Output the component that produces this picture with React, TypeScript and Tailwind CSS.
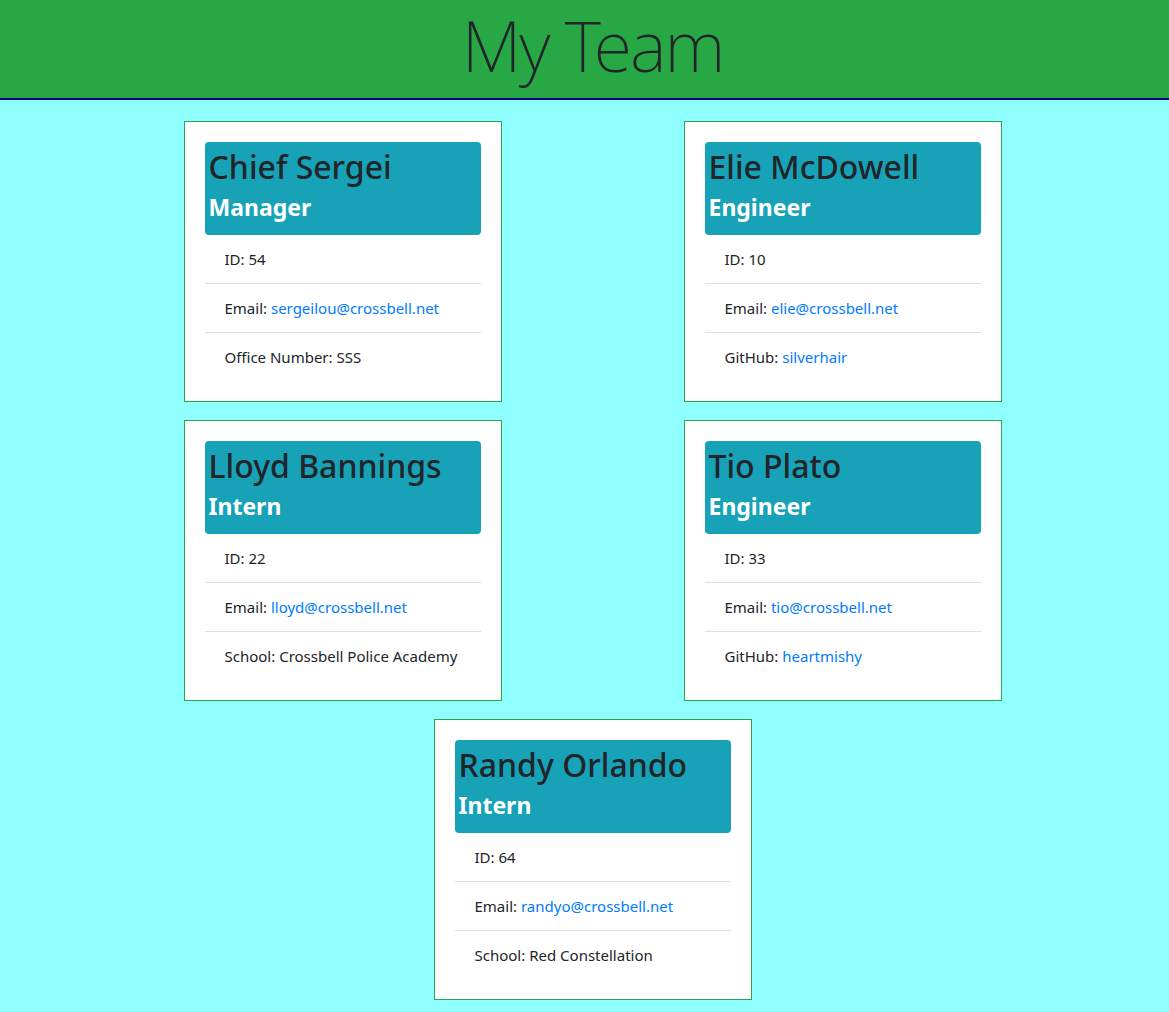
type Member = {
  name: string;
  role: string;
  id: number;
  email: string;
  extraLabel: string;
  extra: string;
  extraLink?: boolean;
};

const team: Member[] = [
  { name: "Chief Sergei", role: "Manager", id: 54, email: "sergeilou@crossbell.net", extraLabel: "Office Number", extra: "SSS" },
  { name: "Elie McDowell", role: "Engineer", id: 10, email: "elie@crossbell.net", extraLabel: "GitHub", extra: "silverhair", extraLink: true },
  { name: "Lloyd Bannings", role: "Intern", id: 22, email: "lloyd@crossbell.net", extraLabel: "School", extra: "Crossbell Police Academy" },
  { name: "Tio Plato", role: "Engineer", id: 33, email: "tio@crossbell.net", extraLabel: "GitHub", extra: "heartmishy", extraLink: true },
  { name: "Randy Orlando", role: "Intern", id: 64, email: "randyo@crossbell.net", extraLabel: "School", extra: "Red Constellation" },
];

const Card = ({ m }: { m: Member }) => (
  <div className="w-[318px] border border-[#28a745] bg-white p-5">
    <div className="rounded bg-[#17a2b8] px-1 pt-1 pb-[13px]">
      <h2 className="text-[32px] leading-[42px] font-medium text-[#212529] mb-1">{m.name}</h2>
      <h4 className="text-[23px] leading-[30px] font-bold text-white">{m.role}</h4>
    </div>
    <ul className="text-[15px]">
      <li className="px-5 py-3 leading-6 border-b border-[#dfdfdf]">ID: {m.id}</li>
      <li className="px-5 py-3 leading-6 border-b border-[#dfdfdf]">
        Email: <a href={`mailto:${m.email}`} className="text-[#007bff]">{m.email}</a>
      </li>
      <li className="px-5 py-3 leading-6">
        {m.extraLabel}:{" "}
        {m.extraLink ? (
          <a href="#" className="text-[#007bff]">{m.extra}</a>
        ) : (
          m.extra
        )}
      </li>
    </ul>
  </div>
);

export default function App() {
  return (
    <div className="min-h-screen bg-[#8fffff] text-[#212529] text-base font-['Noto_Sans',sans-serif]">
      <header className="h-[100px] bg-[#28a745] border-b-2 border-[#00008b] flex items-center justify-center pl-4">
        <h1 className="-mt-2 text-[70px] font-extralight leading-[84px] text-[#212529] tracking-[-2px]">My Team</h1>
      </header>
      <main className="pt-[21px] pl-4 pb-3 flex justify-center">
        <div className="flex flex-col items-center gap-[18px]">
          <div className="flex gap-[182px]">
            <Card m={team[0]} />
            <Card m={team[1]} />
          </div>
          <div className="flex gap-[182px]">
            <Card m={team[2]} />
            <Card m={team[3]} />
          </div>
          <Card m={team[4]} />
        </div>
      </main>
    </div>
  );
}
